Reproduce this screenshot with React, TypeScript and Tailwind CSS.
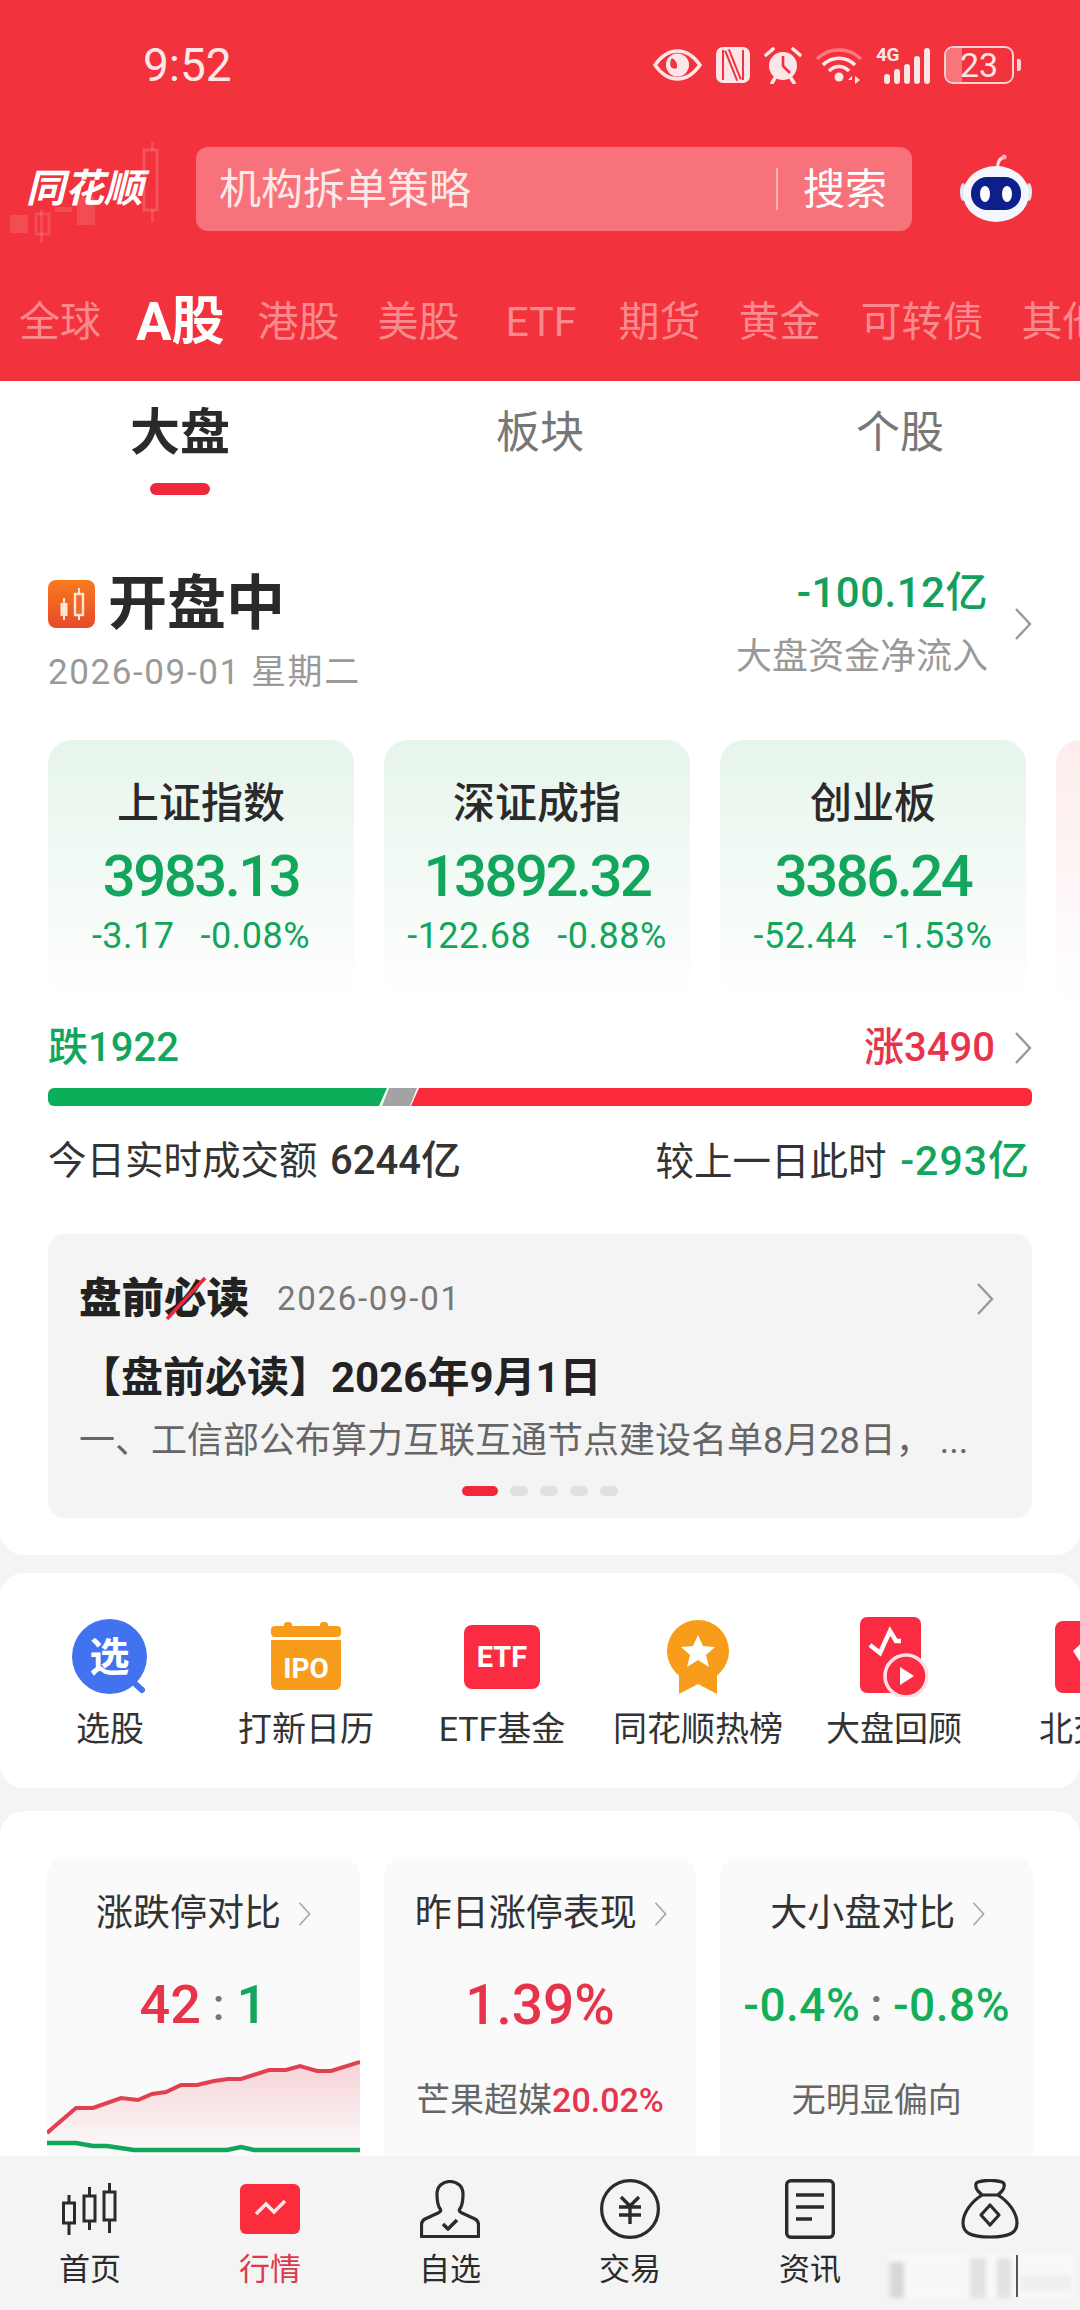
import React from "react";

const RED = "#e8344a";
const GREEN = "#12a55c";

function Chevron({ w = 18, h = 32, color = "#999999" }: { w?: number; h?: number; color?: string }) {
  return (
    <svg width={w} height={h} viewBox="0 0 18 32" preserveAspectRatio="none" className="shrink-0">
      <polyline points="2,1 16,16 2,31" fill="none" stroke={color} strokeWidth="2.4" />
    </svg>
  );
}

function StatusIcons() {
  const c = "#fde6e8";
  const r = "#f2323c";
  return (
    <div className="ml-auto mr-[59px] flex items-center gap-[14px]">
      {/* eye */}
      <svg width="49" height="32" viewBox="0 0 49 32">
        <path d="M2 16C9 6 17 2 24.5 2S40 6 47 16C40 26 32 30 24.5 30S9 26 2 16Z" fill="none" stroke={c} strokeWidth="3.5" />
        <circle cx="24.5" cy="16" r="11.5" fill={c} />
        <path d="M19 9a9 9 0 0 1 5 10c-2 1-4 1-6-1a9 9 0 0 1 1-9Z" fill={r} />
      </svg>
      {/* nfc */}
      <svg width="34" height="36" viewBox="0 0 34 36">
        <rect x="0" y="0" width="34" height="36" rx="7" fill={c} />
        <path d="M7 3V33M27 3V33" stroke={r} strokeWidth="2" />
        <path d="M11 3L23 33" stroke={r} strokeWidth="6" fill="none" />
        <path d="M11 3L23 33" stroke={c} strokeWidth="2" fill="none" />
      </svg>
      {/* alarm */}
      <svg width="38" height="38" viewBox="0 0 38 38">
        <circle cx="19" cy="20" r="14" fill={c} />
        <path d="M19 10V20L26 27" fill="none" stroke={r} strokeWidth="2.6" />
        <path d="M2 9L9 3M36 9L29 3M8 37L11 32M30 37L27 32" stroke={c} strokeWidth="3.6" strokeLinecap="round" />
      </svg>
      {/* wifi */}
      <svg width="46" height="37" viewBox="0 0 46 37">
        <path d="M1 12C13 0 33 0 45 12" fill="none" stroke="#f9787f" strokeWidth="3.6" />
        <path d="M7 18C16 9 30 9 39 18" fill="none" stroke={c} strokeWidth="3.6" />
        <path d="M13 24C19 18 27 18 33 24" fill="none" stroke={c} strokeWidth="3.6" />
        <circle cx="23" cy="30" r="4.5" fill={c} />
        <path d="M36 29L32 33H36ZM39 37L39 29L44 33Z" fill={c} />
      </svg>
      {/* 4G signal */}
      <div className="relative h-[37px] w-[54px]">
        <span className="absolute left-0 top-[-2px] text-[19px] leading-[20px] font-bold tracking-[-0.5px] text-[#fde6e8] [font-family:Roboto,sans-serif]">4G</span>
        <div className="absolute bottom-0 right-0 flex items-end gap-[4px]">
          <div className="h-[10px] w-[6px] rounded-[3px] bg-[#fde6e8]" />
          <div className="h-[15px] w-[6px] rounded-[3px] bg-[#fde6e8]" />
          <div className="h-[20px] w-[6px] rounded-[3px] bg-[#fde6e8]" />
          <div className="h-[28px] w-[6px] rounded-[3px] bg-[#fde6e8]" />
          <div className="h-[36px] w-[6px] rounded-[3px] bg-[#fde6e8]" />
        </div>
      </div>
      {/* battery */}
      <div className="flex items-center gap-[3px]">
        <div className="relative flex h-[38px] w-[70px] items-center justify-center overflow-hidden rounded-[9px] border-[2.5px] border-[#fbd0d4] text-[34px] leading-none text-[#fde6e8]">
          <div className="absolute bottom-0 left-0 top-0 w-[16px] bg-[#f8757c]" />
          <span className="relative">23</span>
        </div>
        <div className="h-[12px] w-[4px] rounded-r-[2px] bg-[#fbd0d4]" />
      </div>
    </div>
  );
}

function Logo() {
  return (
    <div className="relative flex h-full w-[196px] shrink-0 items-center pl-[26px]">
      <svg width="196" height="120" viewBox="0 0 196 120" className="absolute left-0 top-[-17px]">
        <g fill="#ffffff" fillOpacity="0.13">
          <rect x="10" y="85" width="18" height="18" />
          <rect x="77" y="67" width="18" height="28" />
          <rect x="55" y="77" width="17" height="5" />
          <rect x="40" y="80" width="3" height="33" />
          <rect x="151" y="12" width="3" height="80" />
        </g>
        <rect x="36" y="84" width="13" height="20" fill="none" stroke="#ffffff" strokeOpacity="0.13" strokeWidth="3" />
        <rect x="144" y="20" width="13" height="60" fill="#f2323c" stroke="#ffffff" strokeOpacity="0.17" strokeWidth="3" />
      </svg>
      <span className="relative text-[39px] font-bold italic leading-none text-white">同花顺</span>
    </div>
  );
}

function Robot() {
  return (
    <svg width="74" height="68" viewBox="0 0 74 68" className="ml-[47px] shrink-0 self-start mt-[7px]">
      <path d="M39 14C38 8 40 5 45 3" fill="none" stroke="#ffe4e4" strokeWidth="3" />
      <circle cx="45" cy="3" r="2.5" fill="#ffb0b0" />
      <ellipse cx="4" cy="38" rx="3" ry="9" fill="#dfe7f5" />
      <ellipse cx="70" cy="38" rx="3" ry="9" fill="#dfe7f5" />
      <ellipse cx="37" cy="40" rx="33" ry="28" fill="#f4f7fd" />
      <rect x="12" y="23" width="50" height="33" rx="16" fill="#0c1f8a" />
      <ellipse cx="26" cy="40" rx="5" ry="8" fill="#ffffff" />
      <ellipse cx="48" cy="40" rx="5" ry="8" fill="#ffffff" />
    </svg>
  );
}

function Header() {
  const tabs = [
    { label: "港股", cls: "" },
    { label: "美股", cls: "" },
    { label: "ETF", cls: "px-[7px] ml-[1px]" },
    { label: "期货", cls: "-ml-[3px]" },
    { label: "黄金", cls: "" },
    { label: "可转债", cls: "ml-[2px]" },
    { label: "其他", cls: "" },
  ];
  return (
    <header className="h-[381px] shrink-0 overflow-hidden bg-[#f2323c]">
      <div className="flex h-[130px] items-center pl-[143px]">
        <span className="text-[46px] leading-none text-[#fde6e8]">9:52</span>
        <StatusIcons />
      </div>
      <div className="mt-[17px] flex h-[84px]">
        <Logo />
        <div className="flex w-[716px] shrink-0 items-center rounded-[12px] bg-[#f7727a] pl-[23px] pr-[25px]">
          <span className="mt-[2px] text-[42px] leading-none text-[#fde8e8]">机构拆单策略</span>
          <div className="ml-auto mr-[25px] h-[42px] w-[2px] bg-[#fcb4b8]" />
          <span className="mt-[2px] text-[42px] leading-none text-white">搜索</span>
        </div>
        <Robot />
      </div>
      <div className="mt-[62px] flex h-[60px] items-center gap-[38px] whitespace-nowrap pl-[19px] text-[41px] text-[#fa8a8e]">
        <span>全球</span>
        <span className="-ml-[3px] -mr-[5px] text-[53px] font-bold text-white">A股</span>
        {tabs.map((t) => (
          <span key={t.label} className={t.cls}>{t.label}</span>
        ))}
      </div>
    </header>
  );
}

const indexCards = [
  { name: "上证指数", value: "3983.13", chg: "-3.17", pct: "-0.08%" },
  { name: "深证成指", value: "13892.32", chg: "-122.68", pct: "-0.88%" },
  { name: "创业板", value: "3386.24", chg: "-52.44", pct: "-1.53%" },
];

function MarketSection() {
  return (
    <section className="shrink-0 rounded-b-[24px] bg-white pb-[37px]">
      <div className="grid grid-cols-3 pt-[25px]">
        <div className="flex flex-col items-center">
          <span className="text-[50px] font-bold leading-[54px] text-[#2a2a2a]">大盘</span>
          <div className="mt-[23px] h-[12px] w-[60px] rounded-full bg-[#f0283c]" />
        </div>
        <span className="text-center text-[44px] leading-[54px] text-[#777777]">板块</span>
        <span className="text-center text-[44px] leading-[54px] text-[#777777]">个股</span>
      </div>

      <div className="px-[48px]">
        <div className="mt-[79px] flex items-start justify-between">
          <div>
            <div className="flex h-[60px] items-center gap-[13px]">
              <svg width="47" height="48" viewBox="0 0 47 48">
                <defs>
                  <linearGradient id="statusIcon" x1="0" y1="0" x2="0" y2="1">
                    <stop offset="0" stopColor="#f97a1c" />
                    <stop offset="1" stopColor="#e64a2e" />
                  </linearGradient>
                </defs>
                <rect width="47" height="48" rx="8" fill="url(#statusIcon)" />
                <path d="M31 8V40M16 18V40" stroke="#ffe6d2" strokeWidth="2" />
                <rect x="27" y="14" width="8" height="21" fill="#f26a25" stroke="#ffe6d2" strokeWidth="2.4" />
                <rect x="12.5" y="23" width="7" height="13" fill="#ffe6d2" />
              </svg>
              <span className="text-[59px] font-bold leading-[60px] text-[#2a2a2a]">开盘中</span>
            </div>
            <div className="mt-[19px] text-[35px] leading-[40px] tracking-[1.6px] text-[#999999]">2026-09-01 星期二</div>
          </div>
          <div className="-mt-[3px] flex items-center gap-[26px]">
            <div className="flex flex-col items-end">
              <span className="text-[42px] font-medium leading-[44px] tracking-[0.5px] text-[#12a05c]">-100.12亿</span>
              <span className="mt-[22px] text-[36px] leading-[40px] text-[#999999]">大盘资金净流入</span>
            </div>
            <Chevron />
          </div>
        </div>

        <div className="-mr-[48px] mt-[47px] flex gap-[30px] overflow-hidden">
          {indexCards.map((c) => (
            <div key={c.name} className="flex h-[265px] w-[306px] shrink-0 flex-col items-center rounded-[24px] bg-linear-to-b from-[#e6f5ec] to-white pt-[40px]">
              <span className="text-[42px] font-medium leading-[48px] text-[#2a2a2a]">{c.name}</span>
              <span className="mt-[16px] text-[58px] font-medium leading-[64px] tracking-[-2.5px] text-[#12a55c]">{c.value}</span>
              <div className="mt-[8px] flex gap-[26px] text-[36px] leading-[40px] tracking-[0.5px] text-[#12a55c]">
                <span>{c.chg}</span>
                <span>{c.pct}</span>
              </div>
            </div>
          ))}
          <div className="h-[265px] w-[306px] shrink-0 rounded-[24px] bg-linear-to-b from-[#fdecec] to-white" />
        </div>

        <div className="mt-[19px] flex h-[48px] items-center text-[40px] font-medium leading-[48px]">
          <span className="text-[#12a55c]">跌1922</span>
          <span className="ml-auto mr-[19px] text-[#e8344a]">涨3490</span>
          <Chevron />
        </div>

        <div className="mt-[16px] flex h-[18px]">
          <div className="w-[339px] rounded-l-[6px] bg-[#0cae5a] [clip-path:polygon(0_0,100%_0,calc(100%_-_8px)_100%,0_100%)]" />
          <div className="-ml-[5px] w-[35px] bg-[#a3a3a3] [clip-path:polygon(7px_0,100%_0,calc(100%_-_7px)_100%,0_100%)]" />
          <div className="-ml-[6px] flex-1 rounded-r-[6px] bg-[#fb2a3a] [clip-path:polygon(8px_0,100%_0,100%_100%,0_100%)]" />
        </div>

        <div className="mt-[31px] flex h-[48px] items-center justify-between pr-[2px] text-[38.5px] leading-[48px] text-[#333333]">
          <span>今日实时成交额 <span className="ml-[3px] text-[40px] font-medium">6244亿</span></span>
          <span>较上一日此时 <span className="ml-[4px] text-[41px] font-medium tracking-[1px] text-[#12a55c]">-293亿</span></span>
        </div>

        <div className="mt-[49px] h-[284px] rounded-[16px] bg-[#f4f4f4] px-[31px] pt-[41px]">
          <div className="flex h-[48px] items-center">
            <div className="relative">
              <span className="text-[42.5px] font-black leading-[48px] text-[#222222]">盘前必读</span>
              <svg width="44" height="44" viewBox="0 0 44 44" className="absolute left-[86px] top-[1px]">
                <path d="M2 43L40 2" stroke="#f0283c" strokeWidth="3.5" />
              </svg>
            </div>
            <span className="ml-[28px] text-[33px] leading-[48px] tracking-[1.7px] text-[#777777]">2026-09-01</span>
            <div className="ml-auto mr-[7px]">
              <Chevron />
            </div>
          </div>
          <div className="mt-[31px] whitespace-nowrap text-[42px] font-bold leading-[48px] text-[#222222]">【盘前必读】2026年9月1日</div>
          <div className="mt-[17px] whitespace-nowrap text-[36px] leading-[44px] text-[#666666]">
            一、工信部公布算力互联互通节点建设名单8月28日，<span className="ml-[8px]">...</span>
          </div>
          <div className="ml-[383px] mt-[23px] flex gap-[12px]">
            <div className="h-[10px] w-[36px] rounded-full bg-[#f0283c]" />
            <div className="h-[10px] w-[18px] rounded-full bg-[#e0e0e0]" />
            <div className="h-[10px] w-[18px] rounded-full bg-[#e0e0e0]" />
            <div className="h-[10px] w-[18px] rounded-full bg-[#e0e0e0]" />
            <div className="h-[10px] w-[18px] rounded-full bg-[#e0e0e0]" />
          </div>
        </div>
      </div>
    </section>
  );
}

function PickIcon() {
  return (
    <svg width="76" height="76" viewBox="0 0 76 76">
      <path d="M58 60L70 71" stroke="#4172f0" strokeWidth="6" strokeLinecap="round" />
      <circle cx="37.5" cy="37.5" r="37.5" fill="#4172f0" />
      <text x="37.5" y="52" textAnchor="middle" fontSize="40" fontWeight="700" fill="#ffffff">选</text>
    </svg>
  );
}

function IpoIcon() {
  return (
    <svg width="70" height="70" viewBox="0 0 70 70">
      <rect x="13" y="0" width="8" height="8" rx="3" fill="#f89c1c" />
      <rect x="49" y="0" width="8" height="8" rx="3" fill="#f89c1c" />
      <rect x="0" y="4" width="70" height="11" rx="4" fill="#f89c1c" />
      <path d="M0 18H70V62a6 6 0 0 1-6 6H6a6 6 0 0 1-6-6Z" fill="#f89c1c" />
      <text x="35" y="56" textAnchor="middle" fontSize="28" fontWeight="700" fill="#ffffff">IPO</text>
    </svg>
  );
}

function EtfIcon() {
  return (
    <svg width="76" height="64" viewBox="0 0 76 64">
      <rect width="76" height="64" rx="8" fill="#fb2c42" />
      <text x="38" y="42" textAnchor="middle" fontSize="29" fontWeight="700" fill="#ffffff">ETF</text>
    </svg>
  );
}

function MedalIcon() {
  return (
    <svg width="62" height="74" viewBox="0 0 62 74">
      <path d="M12 48V74L31 64L50 74V48Z" fill="#f89c1c" />
      <circle cx="31" cy="31" r="31" fill="#f89c1c" />
      <path d="M31 15L36 26L48 27L39 35L42 47L31 40L20 47L23 35L14 27L26 26Z" fill="#ffffff" />
    </svg>
  );
}

function ReviewIcon() {
  return (
    <svg width="68" height="80" viewBox="0 0 68 80">
      <rect x="0" y="0" width="61" height="76" rx="7" fill="#fb2c42" />
      <path d="M10 28L20 36L30 14L36 24H41" fill="none" stroke="#ffffff" strokeWidth="4.5" />
      <circle cx="46" cy="59" r="21" fill="#fb2c42" stroke="#ffe0e4" strokeWidth="3.5" />
      <path d="M40 50L54 59L40 68Z" fill="#ffffff" />
    </svg>
  );
}

function BeijingIcon() {
  return (
    <svg width="70" height="72" viewBox="0 0 70 72">
      <rect width="70" height="72" rx="8" fill="#fb2c42" />
      <path d="M18 30L35 14L52 30L35 56Z" fill="#ffffff" />
    </svg>
  );
}

const shortcuts = [
  { label: "选股", icon: <PickIcon /> },
  { label: "打新日历", icon: <IpoIcon /> },
  { label: "ETF基金", icon: <EtfIcon /> },
  { label: "同花顺热榜", icon: <MedalIcon /> },
  { label: "大盘回顾", icon: <ReviewIcon /> },
  { label: "北交所", icon: <BeijingIcon /> },
];

function Shortcuts() {
  return (
    <section className="mt-[18px] flex h-[215px] shrink-0 overflow-hidden rounded-[24px] bg-white pl-[12px] pt-[44px]">
      {shortcuts.map((s) => (
        <div key={s.label} className="flex w-[196px] shrink-0 flex-col items-center">
          <div className="flex h-[80px] items-center">{s.icon}</div>
          <span className="mt-[11px] whitespace-nowrap text-[34px] leading-[42px] text-[#333333]">{s.label}</span>
        </div>
      ))}
    </section>
  );
}

const redLine = "0,83 29,58 46,58 74,48 91,50 105,44 119,42 134,35 150,35 167,31 181,29 194,29 222,20 239,20 253,16 270,21 284,21 313,12";
const greenLine = "0,93 29,93 46,96 60,96 87,100 180,100 194,97 207,100 313,100";

function LimitChart() {
  return (
    <svg width="313" height="106" viewBox="0 0 313 106" className="mt-[15px] block">
      <defs>
        <linearGradient id="limitFill" x1="0" y1="0" x2="0" y2="1">
          <stop offset="0" stopColor="#e8344a" stopOpacity="0.2" />
          <stop offset="1" stopColor="#e8344a" stopOpacity="0" />
        </linearGradient>
      </defs>
      <polygon points={`${redLine} 313,100 0,100`} fill="url(#limitFill)" />
      <polyline points={redLine} fill="none" stroke="#e04050" strokeWidth="4" />
      <polyline points={greenLine} fill="none" stroke="#12a55c" strokeWidth="4.5" />
    </svg>
  );
}

function CardTitle({ title, pl }: { title: string; pl: string }) {
  return (
    <div className={`flex h-[48px] items-center gap-[17px] ${pl}`}>
      <span className="text-[37px] leading-[48px] text-[#333333]">{title}</span>
      <Chevron w={13} h={24} color="#aaaaaa" />
    </div>
  );
}

function Compare() {
  return (
    <section className="mt-[23px] min-h-0 flex-1 overflow-hidden rounded-t-[24px] bg-white px-[47px] pt-[46px]">
      <div className="grid h-full grid-cols-3 gap-[24px]">
        <div className="overflow-hidden rounded-t-[20px] bg-[#fafafa] pt-[33px]">
          <CardTitle title="涨跌停对比" pl="pl-[49px]" />
          <div className="mt-[37px] flex h-[60px] items-center justify-center gap-[12px] text-[54px] font-medium leading-[60px]">
            <span style={{ color: RED }}>42</span>
            <span className="text-[44px] text-[#777777]">:</span>
            <span style={{ color: GREEN }}>1</span>
          </div>
          <LimitChart />
        </div>
        <div className="rounded-t-[20px] bg-[#fafafa] pt-[33px]">
          <CardTitle title="昨日涨停表现" pl="pl-[31px]" />
          <div className="mt-[37px] text-center text-[55px] font-medium leading-[60px] text-[#e8344a]">1.39%</div>
          <div className="mt-[45px] text-center text-[34px] leading-[40px] text-[#666666]">
            芒果超媒<span className="font-medium text-[#e8344a]">20.02%</span>
          </div>
        </div>
        <div className="rounded-t-[20px] bg-[#fafafa] pt-[33px]">
          <CardTitle title="大小盘对比" pl="pl-[50px]" />
          <div className="mt-[37px] flex h-[60px] items-center justify-center gap-[10px] text-[46px] font-medium leading-[60px] tracking-[0.5px] text-[#12ae58]">
            <span>-0.4%</span>
            <span className="text-[#777777]">:</span>
            <span>-0.8%</span>
          </div>
          <div className="mt-[45px] text-center text-[34px] leading-[40px] text-[#666666]">无明显偏向</div>
        </div>
      </div>
    </section>
  );
}

const ink = "#2b2b2b";

const navItems = [
  {
    label: "首页",
    icon: (
      <svg width="56" height="52" viewBox="0 0 56 52" fill="none" stroke={ink} strokeWidth="3">
        <rect x="1.5" y="20" width="11" height="20" />
        <path d="M7 12V20M7 40V52" />
        <rect x="22" y="13" width="11" height="25" />
        <path d="M27.5 4V13M27.5 38V47" />
        <rect x="42" y="9" width="11" height="28" />
        <path d="M47.5 0V9M47.5 37V50" />
      </svg>
    ),
  },
  {
    label: "行情",
    active: true,
    icon: (
      <svg width="60" height="50" viewBox="0 0 60 50">
        <rect width="60" height="50" rx="6" fill="#fb2c3c" />
        <path d="M16 30L26 20L34 28L45 17" fill="none" stroke="#ffe8ea" strokeWidth="3.5" />
      </svg>
    ),
  },
  {
    label: "自选",
    icon: (
      <svg width="60" height="58" viewBox="0 0 60 58" fill="none" stroke={ink} strokeWidth="3.2" strokeLinejoin="round">
        <path d="M19 27C17 22 17 17 17 14C17 6 23 1.5 30 1.5S43 6 43 14C43 17 43 22 41 27C39 30 38 31 42 33L55 39C57 40 58.5 42 58.5 45V56.5H1.5V45C1.5 42 3 40 5 39L18 33C22 31 21 30 19 27Z" />
        <path d="M23 44L28 49L37 40" strokeWidth="3.6" />
      </svg>
    ),
  },
  {
    label: "交易",
    icon: (
      <svg width="60" height="60" viewBox="0 0 60 60" fill="none" stroke={ink} strokeWidth="3.2">
        <circle cx="30" cy="30" r="28.4" />
        <path d="M21 18L30 27L39 18M19 28H41M19 36H41M30 27V45" strokeWidth="3.4" />
      </svg>
    ),
  },
  {
    label: "资讯",
    icon: (
      <svg width="50" height="60" viewBox="0 0 50 60" fill="none" stroke={ink} strokeWidth="3.4">
        <rect x="1.7" y="1.7" width="46.6" height="56.6" rx="4" />
        <path d="M11 16H39M11 28H39M11 40H27" />
      </svg>
    ),
  },
  {
    label: "",
    icon: (
      <svg width="58" height="60" viewBox="0 0 58 60" fill="none" stroke={ink} strokeWidth="3.2" strokeLinejoin="round">
        <path d="M17 3C24 1 34 1 41 3C44 4 44 8 41 12L37 16H21L17 12C14 8 14 4 17 3Z" />
        <path d="M21 16C10 23 2 34 2 44C2 54 10 58 29 58S56 54 56 44C56 34 48 23 37 16" />
        <path d="M29 26L38 36L29 46L20 36Z" />
      </svg>
    ),
  },
];

function BottomNav() {
  return (
    <nav className="relative grid h-[154px] shrink-0 grid-cols-6 bg-[#f4f4f4] pt-[22px]">
      {navItems.map((n, i) => (
        <div key={i} className="flex flex-col items-center">
          <div className="flex h-[62px] items-center">{n.icon}</div>
          <span className={`mt-[10px] text-[31px] leading-[40px] ${n.active ? "text-[#e0384a]" : "text-[#2b2b2b]"}`}>
            {n.label}
          </span>
        </div>
      ))}
      {/* watermark, blurred in the screenshot */}
      <div className="absolute bottom-[12px] left-[890px] flex h-[44px] w-[185px] items-end bg-[#f8f8f8] blur-[2px]">
        <div className="h-[36px] w-[14px] bg-[#d8d8d8]" />
        <div className="ml-[66px] h-[40px] w-[16px] bg-[#e2e2e2]" />
        <div className="ml-[11px] h-[40px] w-[14px] bg-[#e2e2e2]" />
        <div className="ml-[10px] mb-[8px] h-[14px] w-[50px] bg-[#eeeeee]" />
      </div>
      <div className="absolute bottom-[13px] left-[1016px] h-[42px] w-[2px] bg-[#555555]" />
    </nav>
  );
}

export default function App() {
  return (
    <div className="flex h-[2310px] w-[1080px] flex-col overflow-hidden bg-[#f4f4f4] [font-family:Roboto,'Noto_Sans_CJK_SC',sans-serif]">
      <Header />
      <MarketSection />
      <Shortcuts />
      <Compare />
      <BottomNav />
    </div>
  );
}
